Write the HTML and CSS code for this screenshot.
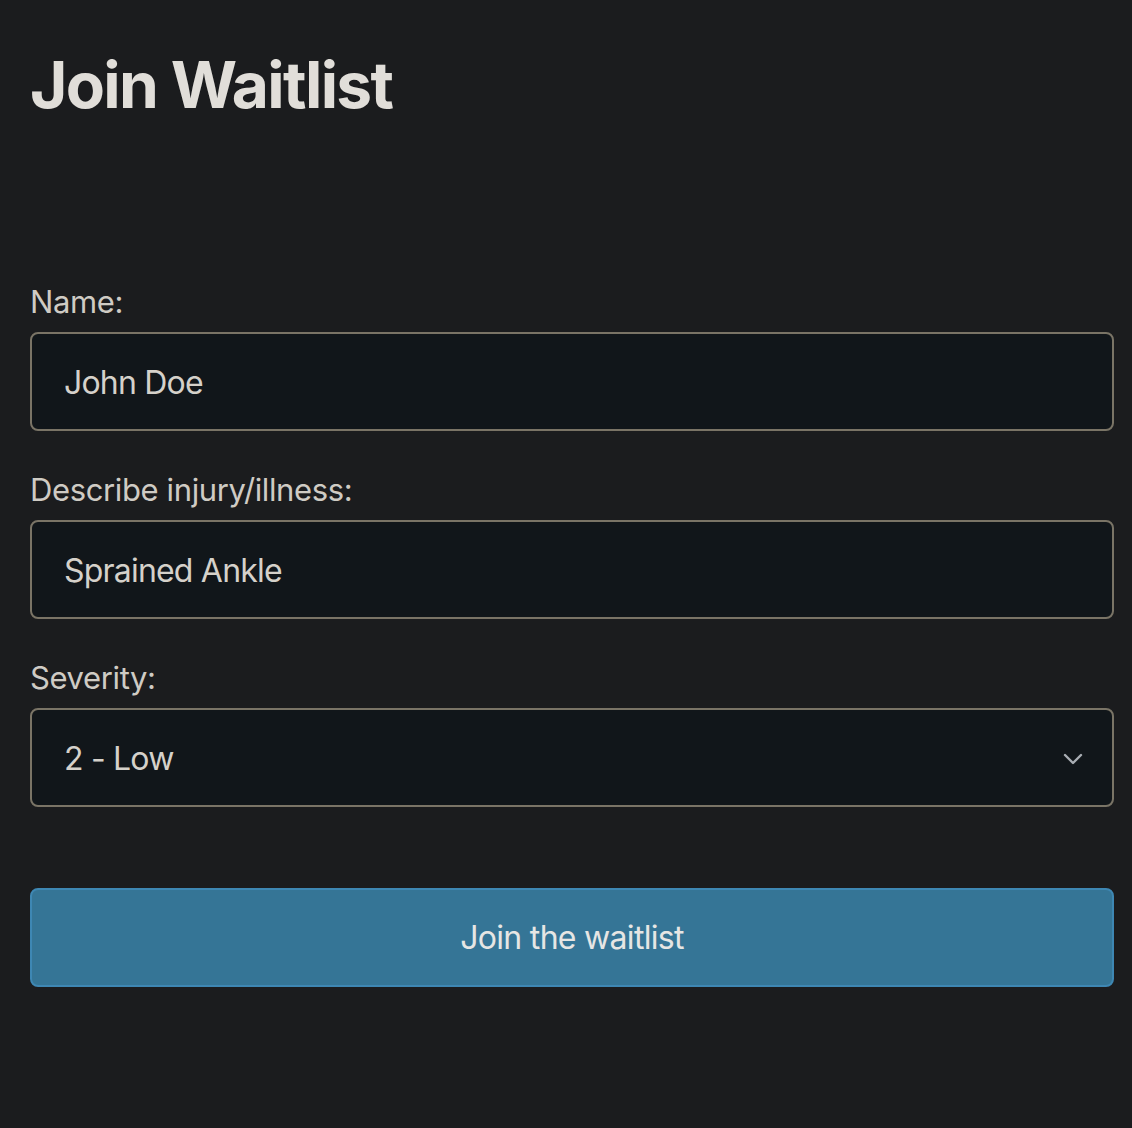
FILE: index.html
```html
<!DOCTYPE html>
<html lang="en">
<head>
<meta charset="utf-8">
<title>Join Waitlist</title>
<link rel="stylesheet" href="styles.css">
</head>
<body>
<main class="page">
  <h1 class="title">Join Waitlist</h1>
  <form class="form">
    <label class="label" for="name">Name:</label>
    <div class="field">John Doe</div>
    <label class="label" for="desc">Describe injury/illness:</label>
    <div class="field">Sprained Ankle</div>
    <label class="label" for="sev">Severity:</label>
    <div class="field select">
      <span>2 - Low</span>
      <svg class="chev" width="20" height="12" viewBox="0 0 20 12" aria-hidden="true"><path d="M2 2 L10 10 L18 2" fill="none" stroke="#a9aeb4" stroke-width="2.4" stroke-linecap="round" stroke-linejoin="round"/></svg>
    </div>
    <button type="button" class="btn">Join the waitlist</button>
  </form>
</main>
</body>
</html>
```

FILE: styles.css
```css
html, body {
  margin: 0;
  padding: 0;
  background: #1b1c1e;
}
body {
  font-family: Inter, "Noto Sans", "Liberation Sans", sans-serif;
  color: #cfcbc4;
  height: 1128px;
}
.page {
  padding: 49px 18px 0 30px;
}
.title {
  margin: 0;
  font-size: 64px;
  line-height: 72px;
  font-weight: 700;
  color: #e1ded9;
  letter-spacing: -1.65px;
}
.form {
  display: flex;
  flex-direction: column;
  margin-top: 157px;
}
.label {
  display: block;
  font-size: 31px;
  line-height: 48px;
  margin-bottom: 6px;
  color: #cfcbc4;
  letter-spacing: -0.37px;
}
.field {
  box-sizing: border-box;
  height: 99px;
  border: 2px solid #7a7466;
  border-radius: 8px;
  background: #11161a;
  padding: 2px 32px 0 32px;
  display: flex;
  align-items: center;
  font-size: 32px;
  color: #d5d1ca;
  margin-bottom: 35px;
  letter-spacing: -0.8px;
}
.select {
  justify-content: space-between;
  margin-bottom: 81px;
}
.chev {
  margin-right: -3px;
}
.btn {
  box-sizing: border-box;
  height: 99px;
  border: 2px solid #3e87b3;
  border-radius: 8px;
  background: #357596;
  color: #e6e6e4;
  font-family: inherit;
  font-size: 32px;
  letter-spacing: -0.7px;
  cursor: pointer;
}
```
